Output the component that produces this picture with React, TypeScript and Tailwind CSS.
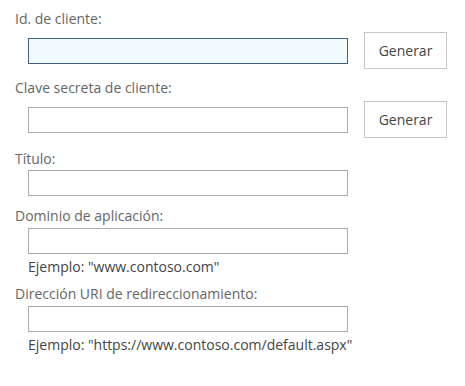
const labelCls = 'block text-[14px] leading-[20px] text-[#666666]'
const boxCls = 'w-[320px] h-[26px] border border-[#ababab] bg-white'
const focusCls = 'w-[320px] h-[26px] border border-[#41607f] bg-[#f2fcff]'

function Field({ label, hint, top }: { label: string; hint?: string; top: string }) {
  return (
    <div className="pl-[15px]">
      <div className={labelCls}>{label}</div>
      <div className={`pl-[13px] ${top}`}>
        <div className={boxCls} />
        {hint && <div className="mt-[3px] text-[14px] leading-[20px] text-[#444444]">{hint}</div>}
      </div>
    </div>
  )
}

function GenRow({ label, focused }: { label: string; focused?: boolean }) {
  return (
    <div className="pl-[15px]">
      <div className={`${labelCls} pb-[3px]`}>{label}</div>
      <div className="flex items-center pl-[13px]">
        <div className={focused ? focusCls : boxCls} />
        <button className="ml-[16px] w-[83px] h-[37px] border border-[#c6c6c6] bg-white text-[14px] text-[#444444]">
          Generar
        </button>
      </div>
    </div>
  )
}

export default function App() {
  return (
    <div
      className="w-[465px] h-[386px] bg-white pt-[9px]"
      style={{ fontFamily: '"Open Sans", "Noto Sans", sans-serif' }}
    >
      <GenRow label="Id. de cliente:" focused />
      <div className="h-[9px]" />
      <GenRow label="Clave secreta de cliente:" />
      <div className="h-[11px]" />
      <Field label="Título:" top="pt-[1px]" />
      <div className="h-[10px]" />
      <Field label="Dominio de aplicación:" hint={'Ejemplo: "www.contoso.com"'} top="pt-[2px]" />
      <div className="h-[7px]" />
      <Field
        label="Dirección URI de redireccionamiento:"
        hint={'Ejemplo: "https://www.contoso.com/default.aspx"'}
        top="pt-[2px]"
      />
    </div>
  )
}
